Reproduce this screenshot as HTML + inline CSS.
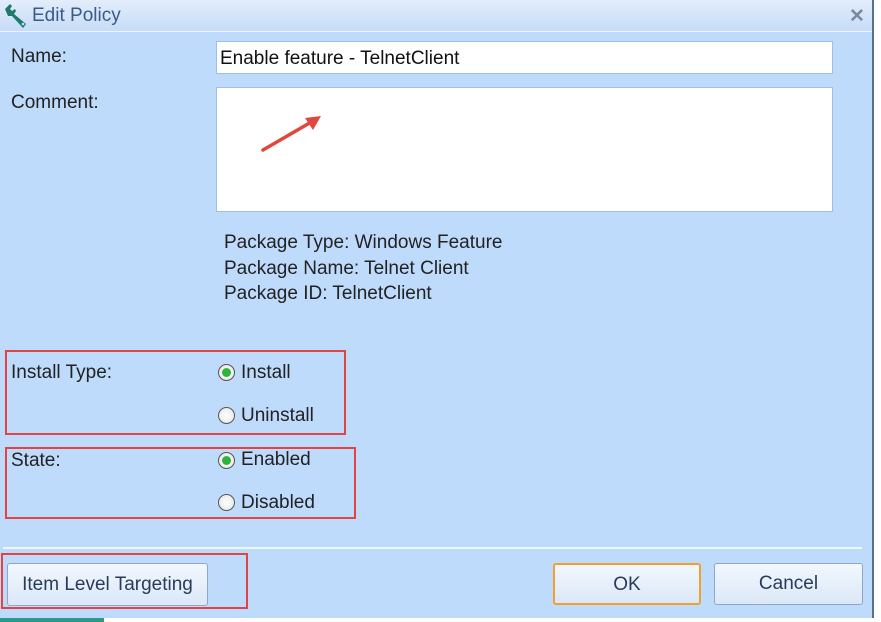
<!DOCTYPE html>
<html><head><style>
*{margin:0;padding:0;box-sizing:border-box}
body{width:881px;height:622px;overflow:hidden;background:#fff;font-family:"Liberation Sans",sans-serif;position:relative}
.dlg{position:absolute;left:0;top:0;width:874px;height:618px;background:#bfdbfc;border-right:2px solid #5a6f8a}
.title{position:absolute;left:0;top:0;width:872px;height:32px;background:linear-gradient(#e3edfa,#c6dcf8);border-bottom:1px solid #eef5ff}
.t{position:absolute;font-size:19px;color:#222;white-space:nowrap}
.box{position:absolute;background:#fff;border:1px solid #9ebfe6}
.red{position:absolute;border:2px solid #e04444}
.btn{position:absolute;border:1px solid #8ea7c8;border-radius:3px;background:linear-gradient(#f2f7fd,#dbe8f8);font-size:19px;color:#2a3a5a;text-align:center}
.radio{position:absolute;width:17px;height:17px;border-radius:50%;border:1px solid #555;background:radial-gradient(#fff,#e4e4e4)}
.radio.on::after{content:"";position:absolute;left:3px;top:3px;width:9px;height:9px;border-radius:50%;background:#2fb43a}
</style></head><body>
<div class="dlg">
<div class="title">
<svg style="position:absolute;left:3px;top:3px" width="28" height="26" viewBox="0 0 28 26"><path d="M2 6 L7 1 L9 3 L7 6 L9 8 L12 6 L13 8 L11 11 L23 21 L20 25 L9 13 L5 13 Z" fill="#1f7a6c"/><circle cx="20" cy="21" r="1.3" fill="#c9e0f8"/></svg>
<div class="t" style="left:32px;top:5px;color:#3d5a86;font-size:19px">Edit Policy</div>
<div class="t" style="left:849px;top:5px;color:#7a8a9e;font-size:19px;font-weight:bold">✕</div>
</div>
<div class="t" style="left:11px;top:46px">Name:</div>
<div class="box" style="left:216px;top:41px;width:617px;height:33px"><span class="t" style="left:3px;top:6px;color:#111">Enable feature - TelnetClient</span></div>
<div class="t" style="left:11px;top:92px">Comment:</div>
<div class="box" style="left:216px;top:87px;width:617px;height:125px"></div>
<svg style="position:absolute;left:255px;top:108px" width="75" height="50"><line x1="8" y1="42" x2="58" y2="13" stroke="#e0483e" stroke-width="3.5" stroke-linecap="round"/><path d="M66 8 L50 10 L58 22 Z" fill="#e0483e"/></svg>
<div class="t" style="left:224px;top:230px;line-height:25.5px">Package Type: Windows Feature<br>Package Name: Telnet Client<br>Package ID: TelnetClient</div>
<div class="t" style="left:11px;top:362px">Install Type:</div>
<div class="radio on" style="left:218px;top:364px"></div><div class="t" style="left:241px;top:362px">Install</div>
<div class="radio" style="left:218px;top:407px"></div><div class="t" style="left:241px;top:405px">Uninstall</div>
<div class="t" style="left:11px;top:450px">State:</div>
<div class="radio on" style="left:218px;top:452px"></div><div class="t" style="left:241px;top:449px">Enabled</div>
<div class="radio" style="left:218px;top:494px"></div><div class="t" style="left:241px;top:492px">Disabled</div>
<div class="red" style="left:5px;top:350px;width:341px;height:85px"></div>
<div class="red" style="left:5px;top:447px;width:351px;height:72px"></div>
<div style="position:absolute;left:3px;top:547px;width:859px;height:2px;background:#eef6ff"></div>
<div class="btn" style="left:7px;top:563px;width:201px;height:43px;line-height:41px">Item Level Targeting</div>
<div class="red" style="left:1px;top:553px;width:247px;height:56px"></div>
<div class="btn" style="left:553px;top:563px;width:148px;height:42px;line-height:40px;border:2px solid #f0a030">OK</div>
<div class="btn" style="left:714px;top:563px;width:149px;height:42px;line-height:40px">Cancel</div>
</div>
<div style="position:absolute;left:0;top:618px;width:104px;height:4px;background:#2a9a8a"></div>
</body></html>
